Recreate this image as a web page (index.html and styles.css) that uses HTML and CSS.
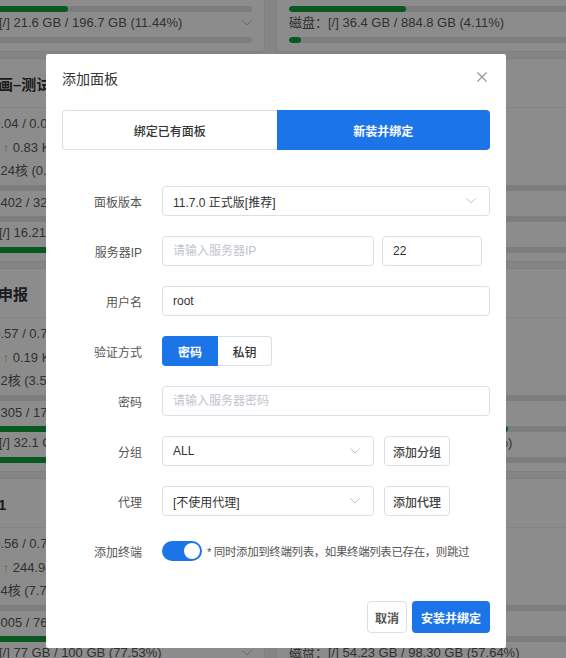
FILE: index.html
```html
<!DOCTYPE html>
<html lang="zh-CN">
<head>
  <meta charset="utf-8">
  <title>添加面板</title>
  <link rel="stylesheet" href="styles.css">
</head>
<body>

<div class="page">
  <div class="grid">

    <div class="card">
      <div class="card-head">生产服务器</div>
      <div class="card-body">
        <div class="row r-load">负载: 0.12 / 0.10 / 0.08</div>
        <div class="row r-net">网络： <span class="up">↑</span> 1.02 KB/s <span class="down">↓</span> 0.88 KB/s</div>
        <div class="row r-cpu">CPU：2核 (5.2%)</div>
        <div class="bar"><i style="width:5%"></i></div>
        <div class="row r-mem">内存: 1452 / 3934 MB (36.9%)</div>
        <div class="bar"><i style="width:37%"></i></div>
        <div class="row r-disk"><span>磁盘：[/] 21.6 GB / 196.7 GB (11.44%)</span><svg class="chev" width="10" height="6" viewBox="0 0 10 6"><polyline points="0.5,0.5 5,5 9.5,0.5"/></svg></div>
        <div class="bar bar-last"><i style="width:11.44%"></i></div>
      </div>
    </div>

    <div class="card">
      <div class="card-head">数据中心</div>
      <div class="card-body">
        <div class="row r-load">负载: 0.21 / 0.18 / 0.15</div>
        <div class="row r-net">网络： <span class="up">↑</span> 3.41 KB/s <span class="down">↓</span> 2.07 KB/s</div>
        <div class="row r-cpu">CPU：16核 (2.1%)</div>
        <div class="bar"><i style="width:2%"></i></div>
        <div class="row r-mem">内存: 2087 / 31746 MB (6.6%)</div>
        <div class="bar"><i style="width:40%"></i></div>
        <div class="row r-disk"><span>磁盘：[/] 36.4 GB / 884.8 GB (4.11%)</span><svg class="chev" width="10" height="6" viewBox="0 0 10 6"><polyline points="0.5,0.5 5,5 9.5,0.5"/></svg></div>
        <div class="bar bar-last"><i style="width:4.11%"></i></div>
      </div>
    </div>

    <div class="card">
      <div class="card-head">小动画–测试服</div>
      <div class="card-body">
        <div class="row r-load">负载: 0.04 / 0.05 / 0.01</div>
        <div class="row r-net">网络： <span class="up">↑</span> 0.83 KB/s <span class="down">↓</span> 1.52 KB/s</div>
        <div class="row r-cpu">CPU：24核 (0.1%)</div>
        <div class="bar"><i style="width:0.1%"></i></div>
        <div class="row r-mem">内存: 1402 / 32010 MB (4.4%)</div>
        <div class="bar"><i style="width:4.4%"></i></div>
        <div class="row r-disk"><span>磁盘：[/] 16.21 GB / 40 GB (40.5%)</span><svg class="chev" width="10" height="6" viewBox="0 0 10 6"><polyline points="0.5,0.5 5,5 9.5,0.5"/></svg></div>
        <div class="bar bar-last"><i style="width:40.5%"></i></div>
      </div>
    </div>

    <div class="card">
      <div class="card-head">备份节点</div>
      <div class="card-body">
        <div class="row r-load">负载: 0.08 / 0.06 / 0.02</div>
        <div class="row r-net">网络： <span class="up">↑</span> 0.27 KB/s <span class="down">↓</span> 0.51 KB/s</div>
        <div class="row r-cpu">CPU：4核 (1.3%)</div>
        <div class="bar"><i style="width:1.3%"></i></div>
        <div class="row r-mem">内存: 1980 / 7821 MB (25.3%)</div>
        <div class="bar"><i style="width:25.3%"></i></div>
        <div class="row r-disk"><span>磁盘：[/] 12.8 GB / 59.0 GB (21.7%)</span><svg class="chev" width="10" height="6" viewBox="0 0 10 6"><polyline points="0.5,0.5 5,5 9.5,0.5"/></svg></div>
        <div class="bar bar-last"><i style="width:21.7%"></i></div>
      </div>
    </div>

    <div class="card">
      <div class="card-head">项目申报</div>
      <div class="card-body">
        <div class="row r-load">负载: 0.57 / 0.71 / 0.66</div>
        <div class="row r-net">网络： <span class="up">↑</span> 0.19 KB/s <span class="down">↓</span> 0.35 KB/s</div>
        <div class="row r-cpu">CPU：2核 (3.5%)</div>
        <div class="bar"><i style="width:3.5%"></i></div>
        <div class="row r-mem">内存: 1305 / 1738 MB (75.1%)</div>
        <div class="bar"><i style="width:75.1%"></i></div>
        <div class="row r-disk"><span>磁盘：[/] 32.1 GB / 39.2 GB (81.9%)</span><svg class="chev" width="10" height="6" viewBox="0 0 10 6"><polyline points="0.5,0.5 5,5 9.5,0.5"/></svg></div>
        <div class="bar bar-last"><i style="width:81.9%"></i></div>
      </div>
    </div>

    <div class="card">
      <div class="card-head">官网</div>
      <div class="card-body">
        <div class="row r-load">负载: 0.33 / 0.29 / 0.30</div>
        <div class="row r-net">网络： <span class="up">↑</span> 5.62 KB/s <span class="down">↓</span> 4.18 KB/s</div>
        <div class="row r-cpu">CPU：8核 (4.6%)</div>
        <div class="bar"><i style="width:4.6%"></i></div>
        <div class="row r-mem">内存: 11902 / 15884 MB (74.9%)</div>
        <div class="bar"><i style="width:75%"></i></div>
        <div class="row r-disk"><span>磁盘：[/] 132.5 GB / 862.2 GB (5.37%)</span><svg class="chev" width="10" height="6" viewBox="0 0 10 6"><polyline points="0.5,0.5 5,5 9.5,0.5"/></svg></div>
        <div class="bar bar-last"><i style="width:15.37%"></i></div>
      </div>
    </div>

    <div class="card">
      <div class="card-head">测试1</div>
      <div class="card-body">
        <div class="row r-load">负载: 0.56 / 0.74 / 0.70</div>
        <div class="row r-net">网络： <span class="up">↑</span> 244.94 KB/s <span class="down">↓</span> 38.10 KB/s</div>
        <div class="row r-cpu">CPU：4核 (7.7%)</div>
        <div class="bar"><i style="width:7.7%"></i></div>
        <div class="row r-mem">内存: 6005 / 7684 MB (78.1%)</div>
        <div class="bar"><i style="width:78.1%"></i></div>
        <div class="row r-disk"><span>磁盘：[/] 77 GB / 100 GB (77.53%)</span><svg class="chev" width="10" height="6" viewBox="0 0 10 6"><polyline points="0.5,0.5 5,5 9.5,0.5"/></svg></div>
        <div class="bar bar-last"><i style="width:77.53%"></i></div>
      </div>
    </div>

    <div class="card">
      <div class="card-head">开发机</div>
      <div class="card-body">
        <div class="row r-load">负载: 0.15 / 0.12 / 0.09</div>
        <div class="row r-net">网络： <span class="up">↑</span> 0.66 KB/s <span class="down">↓</span> 0.92 KB/s</div>
        <div class="row r-cpu">CPU：4核 (2.4%)</div>
        <div class="bar"><i style="width:2.4%"></i></div>
        <div class="row r-mem">内存: 3120 / 7821 MB (39.9%)</div>
        <div class="bar"><i style="width:39.9%"></i></div>
        <div class="row r-disk"><span>磁盘：[/] 54.23 GB / 98.30 GB (57.64%)</span><svg class="chev" width="10" height="6" viewBox="0 0 10 6"><polyline points="0.5,0.5 5,5 9.5,0.5"/></svg></div>
        <div class="bar bar-last"><i style="width:57.64%"></i></div>
      </div>
    </div>

  </div>
</div>

<div class="mask">
  <div class="dialog">

    <div class="dialog-head">
      <span class="dialog-title">添加面板</span>
      <svg class="close" width="10" height="10" viewBox="0 0 10 10"><path d="M0.5 0.5L9.5 9.5M9.5 0.5L0.5 9.5"/></svg>
    </div>

    <div class="tabs">
      <div class="tab">绑定已有面板</div>
      <div class="tab tab-active">新装并绑定</div>
    </div>

    <div class="form">
      <div class="form-row">
        <span class="form-label">面板版本</span>
        <div class="select w-full"><span>11.7.0 正式版[推荐]</span><svg class="chev" width="10" height="6" viewBox="0 0 10 6"><polyline points="0.5,0.5 5,5 9.5,0.5"/></svg></div>
      </div>

      <div class="form-row">
        <span class="form-label">服务器IP</span>
        <input class="input w-ip" type="text" placeholder="请输入服务器IP">
        <input class="input w-port" type="text" value="22">
      </div>

      <div class="form-row">
        <span class="form-label">用户名</span>
        <input class="input w-full" type="text" value="root">
      </div>

      <div class="form-row">
        <span class="form-label">验证方式</span>
        <div class="radio-group">
          <div class="radio radio-on">密码</div>
          <div class="radio">私钥</div>
        </div>
      </div>

      <div class="form-row">
        <span class="form-label">密码</span>
        <input class="input w-full" type="password" placeholder="请输入服务器密码">
      </div>

      <div class="form-row">
        <span class="form-label">分组</span>
        <div class="select w-ip"><span>ALL</span><svg class="chev" width="10" height="6" viewBox="0 0 10 6"><polyline points="0.5,0.5 5,5 9.5,0.5"/></svg></div>
        <button class="btn btn-side">添加分组</button>
      </div>

      <div class="form-row">
        <span class="form-label">代理</span>
        <div class="select w-ip"><span>[不使用代理]</span><svg class="chev" width="10" height="6" viewBox="0 0 10 6"><polyline points="0.5,0.5 5,5 9.5,0.5"/></svg></div>
        <button class="btn btn-side">添加代理</button>
      </div>

      <div class="form-row">
        <span class="form-label">添加终端</span>
        <div class="switch"><span class="knob"></span></div>
        <span class="hint">* 同时添加到终端列表，如果终端列表已存在，则跳过</span>
      </div>
    </div>

    <div class="dialog-foot">
      <button class="btn btn-cancel">取消</button>
      <button class="btn btn-primary">安装并绑定</button>
    </div>

  </div>
</div>

</body>
</html>
```

FILE: styles.css
```css
body {
  margin: 0;
  overflow: hidden;
  background: #f0f2f5;
  font-family: "Liberation Sans", "Noto Sans CJK SC", sans-serif;
}

/* server cards behind the dialog (page is scrolled) */
.page {
  margin: -152px 0 0 -53px;
}

.grid {
  display: grid;
  grid-template-columns: 318px 318px;
  column-gap: 11px;
  row-gap: 6px;
}

.card {
  height: 204px;
  box-sizing: border-box;
  background: #fff;
  border: 1px solid #e4e7ed;
  border-radius: 4px;
  color: #5a5a5a;
  font-size: 13px;
}

.card-head {
  height: 49px;
  box-sizing: border-box;
  border-bottom: 1px solid #ebeef5;
  padding-left: 20px;
  display: flex;
  align-items: center;
  font-size: 15px;
  font-weight: bold;
  color: #333;
  white-space: nowrap;
}

.card-body {
  padding: 4px 12px 0;
}

.row {
  white-space: nowrap;
}

.r-load, .r-net {
  height: 24px;
  line-height: 24px;
}

.r-cpu {
  height: 22px;
  line-height: 22px;
}

.r-mem {
  height: 20px;
  line-height: 20px;
}

.r-disk {
  height: 18px;
  line-height: 18px;
  display: flex;
  justify-content: space-between;
  align-items: center;
}

.up {
  color: #e6a23c;
}

.down {
  color: #67c23a;
}

.bar {
  height: 6px;
  margin: 3px 0 2px;
  border-radius: 3px;
  background: #e2e4e8;
  overflow: hidden;
}

.bar i {
  display: block;
  height: 100%;
  border-radius: 3px;
  background: #12a03a;
}

.bar-last {
  margin-top: 5px;
}

.chev {
  flex: none;
  fill: none;
  stroke: #c0c4cc;
  stroke-width: 1;
}

/* dialog */
.mask {
  position: fixed;
  top: 0;
  left: 0;
  right: 0;
  bottom: 0;
  background: rgba(0, 0, 0, 0.45);
}

.dialog {
  margin: 54px 0 0 46px;
  width: 460px;
  box-sizing: border-box;
  padding: 16px 16px 15px;
  background: #fff;
  border-radius: 2px;
  font-size: 12px;
  color: #333;
}

.dialog-head {
  display: flex;
  justify-content: space-between;
  align-items: flex-start;
}

.dialog-title {
  font-size: 14px;
  line-height: 18px;
  color: #333;
}

.close {
  margin: 2px 3px 0 0;
  fill: none;
  stroke: #909399;
  stroke-width: 1.1;
}

.tabs {
  display: flex;
  margin-top: 22px;
  height: 40px;
}

.tab {
  flex: 1;
  display: flex;
  align-items: center;
  justify-content: center;
  box-sizing: border-box;
  border: 1px solid #dcdfe6;
  border-right: none;
  border-radius: 4px 0 0 4px;
  color: #333;
  font-weight: 500;
}

.tab-active {
  border: none;
  border-radius: 0 4px 4px 0;
  background: #1c74e9;
  color: #fff;
  font-weight: bold;
}

.form {
  margin-top: 36px;
  display: flex;
  flex-direction: column;
  gap: 20px;
}

.form-row {
  display: flex;
  align-items: center;
  height: 30px;
}

.form-label {
  width: 100px;
  box-sizing: border-box;
  padding-right: 20px;
  text-align: right;
  color: #555;
}

.input, .select {
  height: 30px;
  box-sizing: border-box;
  border: 1px solid #dcdfe6;
  border-radius: 4px;
  padding: 0 10px;
  font-family: "Liberation Sans", "Noto Sans CJK SC", sans-serif;
  font-size: 12px;
  color: #333;
  background: #fff;
  outline: none;
}

.input::placeholder {
  color: #c0c4cc;
}

.select {
  display: flex;
  align-items: center;
  justify-content: space-between;
  padding-right: 13px;
}

.w-full {
  width: 328px;
}

.w-ip {
  width: 212px;
}

.w-port {
  width: 100px;
  margin-left: 8px;
}

.radio-group {
  display: flex;
  height: 30px;
}

.radio {
  display: flex;
  align-items: center;
  justify-content: center;
  width: 54px;
  box-sizing: border-box;
  border: 1px solid #dcdfe6;
  border-left: none;
  border-radius: 0 4px 4px 0;
  color: #333;
  font-weight: 500;
}

.radio-on {
  width: 56px;
  border: none;
  border-radius: 4px 0 0 4px;
  background: #1c74e9;
  color: #fff;
  font-weight: bold;
}

.btn {
  height: 32px;
  box-sizing: border-box;
  border: 1px solid #dcdfe6;
  border-radius: 4px;
  background: #fff;
  padding: 0 8px;
  font-family: "Liberation Sans", "Noto Sans CJK SC", sans-serif;
  font-size: 12px;
  color: #444;
  font-weight: 500;
}

.btn-side {
  height: 30px;
  margin-left: 10px;
  width: 66px;
  padding: 0;
}

.switch {
  position: relative;
  width: 40px;
  height: 20px;
  border-radius: 10px;
  background: #1c74e9;
}

.knob {
  position: absolute;
  top: 2px;
  right: 2px;
  width: 16px;
  height: 16px;
  border-radius: 50%;
  background: #fff;
}

.hint {
  margin-left: 5px;
  font-size: 11.5px;
  letter-spacing: -0.4px;
  color: #555;
}

.dialog-foot {
  margin-top: 35px;
  display: flex;
  justify-content: flex-end;
  gap: 5px;
}

.btn-cancel {
  width: 40px;
  padding: 0;
  font-weight: bold;
  color: #555;
}

.btn-primary {
  width: 78px;
  padding: 0;
  border: none;
  background: #1c74e9;
  color: #fff;
  font-weight: bold;
}
```
